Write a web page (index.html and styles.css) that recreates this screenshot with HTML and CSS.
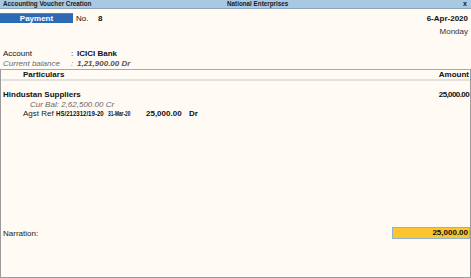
FILE: index.html
```html
<!DOCTYPE html>
<html>
<head>
<meta charset="utf-8">
<link rel="stylesheet" href="styles.css">
</head>
<body>
<div class="window">
  <div class="titlebar">
    <span class="title-left">Accounting Voucher Creation</span>
    <span class="title-center">National Enterprises</span>
    <span class="title-close">x</span>
  </div>
  <div class="head">
    <div class="head-left">
      <span class="vtype">Payment</span>
      <span class="no-label">No.</span>
      <span class="no-value">8</span>
    </div>
    <div class="head-right">
      <div class="date">6-Apr-2020</div>
      <div class="day">Monday</div>
    </div>
  </div>
  <div class="account">
    <div class="acc-row">
      <span class="acc-label">Account</span>
      <span class="acc-colon">:</span>
      <span class="acc-value">ICICI Bank</span>
    </div>
    <div class="acc-row bal">
      <span class="acc-label">Current balance</span>
      <span class="acc-colon">:</span>
      <span class="acc-value">1,21,900.00 Dr</span>
    </div>
  </div>
  <div class="grid">
    <div class="grid-head">
      <span class="col-part">Particulars</span>
      <span class="col-amt">Amount</span>
    </div>
    <div class="entries">
      <div class="entry-row">
        <span class="ledger">Hindustan Suppliers</span>
        <span class="ledger-amt">25,000.00</span>
      </div>
      <div class="curbal"><span class="cb-label">Cur Bal:</span> <span class="cb-value">2,62,500.00 Cr</span></div>
      <div class="ref-row">
        <span class="ref-label">Agst Ref</span>
        <span class="ref-name"><span class="squeeze s76">HS/212312/19-20</span></span>
        <span class="ref-date"><span class="squeeze s60">31-Mar-20</span></span>
        <span class="ref-amt">25,000.00</span>
        <span class="ref-dr">Dr</span>
      </div>
    </div>
    <div class="narration-row">
      <span class="narr-label">Narration:</span>
      <span class="narr-total">25,000.00</span>
    </div>
  </div>
</div>
</body>
</html>
```
FILE: styles.css
```css
* { box-sizing: border-box; }
html, body {
  margin: 0;
  padding: 0;
}
body {
  width: 471px;
  height: 278px;
  background: #fffaf3;
  font-family: "Liberation Sans", Arial, sans-serif;
  font-size: 8px;
  color: #111;
  overflow: hidden;
}
.window {
  display: flex;
  flex-direction: column;
  height: 278px;
}
.titlebar {
  height: 9px;
  background: #a9c8e2;
  border-bottom: 1px solid #8fa6b8;
  display: flex;
  align-items: center;
  font-size: 6.3px;
  font-weight: bold;
  line-height: 8px;
  padding: 0 3px;
  color: #1a1a1a;
}
.title-left { width: 224px; }
.title-center { flex: 1; }
.title-close { font-size: 7px; padding-right: 1px; }

.head {
  display: flex;
  justify-content: space-between;
  margin-top: 4px;
  height: 36px;
}
.head-left {
  display: flex;
  align-items: center;
  height: 10px;
}
.vtype {
  width: 73px;
  height: 10px;
  background: #2c6ab6;
  color: #fff;
  font-weight: bold;
  text-align: center;
  line-height: 10px;
  border-top: 1px solid #4f86c6;
}
.no-label { margin-left: 3px; width: 22px; }
.no-value { font-weight: bold; }
.head-right {
  text-align: right;
  padding-right: 3px;
  line-height: 9px;
}
.date { font-weight: bold; margin-top: 1px; }
.day { margin-top: 4px; color: #333; }

.account {
  line-height: 10px;
  height: 20px;
}
.acc-row { display: flex; padding-left: 3px; }
.acc-label { width: 68px; }
.acc-colon { width: 6px; }
.acc-value { font-weight: bold; }
.bal { color: #6a6a6a; font-style: italic; }
.bal .acc-value { font-weight: bold; color: #555; }

.grid {
  flex: 1;
  display: flex;
  flex-direction: column;
  border: 1px solid #9b9b9b;
  border-top: 1px solid #a8a8a8;
}
.grid-head {
  display: flex;
  justify-content: space-between;
  font-weight: bold;
  height: 11px;
  line-height: 9px;
  padding: 0 1px 0 22px;
  border-bottom: 2px solid #e4e2de;
}
.entries {
  flex: 1;
  padding-top: 9px;
  line-height: 9px;
}
.entry-row {
  display: flex;
  justify-content: space-between;
  padding: 0 1px 0 2px;
  font-weight: bold;
}
.ledger-amt { letter-spacing: -0.6px; }
.curbal {
  padding-left: 29px;
  font-style: italic;
  color: #666;
  margin-top: 1px;
}
.ref-row {
  display: flex;
  padding-left: 22px;
  white-space: nowrap;
}
.ref-label { width: 33px; color: #222; }
.ref-name { width: 52px; font-weight: bold; }
.ref-date { width: 38px; font-weight: bold; }
.ref-amt { width: 43px; font-weight: bold; }
.ref-dr { font-weight: bold; }
.squeeze {
  display: inline-block;
  transform-origin: left center;
}
.s76 { transform: scaleX(0.76); }
.s60 { transform: scaleX(0.6); }

.narration-row {
  display: flex;
  justify-content: space-between;
  align-items: center;
  height: 12px;
  margin-bottom: 38px;
  padding-left: 2px;
}
.narr-label { color: #222; }
.narr-total {
  width: 78px;
  height: 12px;
  background: #fcc42e;
  border: 1px solid #8fb4cc;
  text-align: right;
  font-weight: bold;
  line-height: 10px;
  padding-right: 1px;
}
```
